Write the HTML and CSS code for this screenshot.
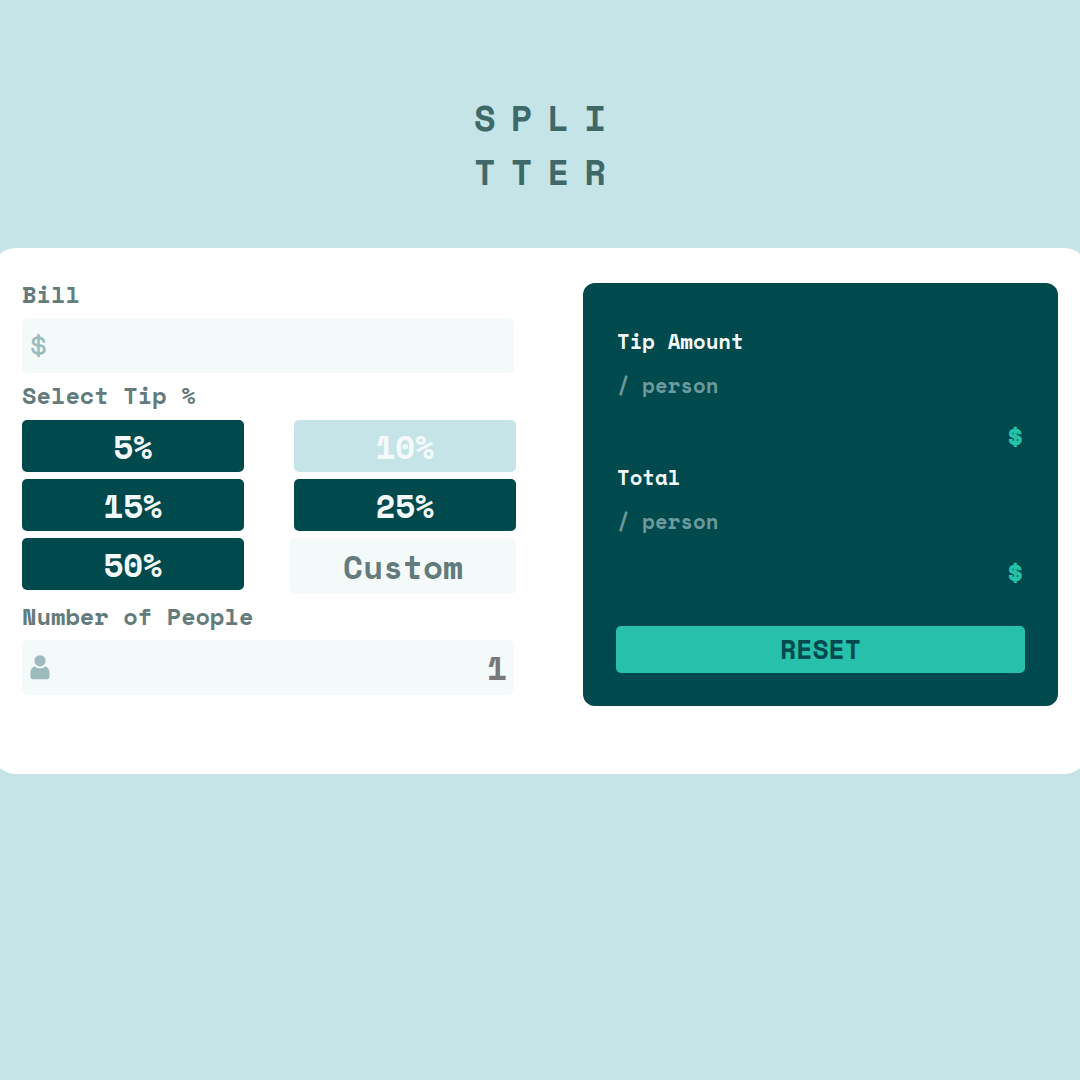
FILE: index.html
```html
<!DOCTYPE html>
<html lang="en">
<head>
<meta charset="utf-8">
<title>Splitter</title>
<link rel="stylesheet" href="styles.css">
</head>
<body>
<h1 class="logo"><span>SPLI</span><span>TTER</span></h1>
<main class="card">
  <section class="form">
    <div class="label">Bill</div>
    <div class="field"><span class="dollar">$</span></div>
    <div class="label label-tip">Select Tip %</div>
    <div class="tips">
      <button class="tip">5%</button>
      <button class="tip active">10%</button>
      <button class="tip">15%</button>
      <button class="tip">25%</button>
      <button class="tip">50%</button>
      <div class="custom">Custom</div>
    </div>
    <div class="label label-people">Number of People</div>
    <div class="field people">
      <svg class="person" viewBox="0 0 20 25"><circle cx="10" cy="5.8" r="5.6"/><path d="M4.6 11.2C6 12.6 7.8 13.3 10 13.3s4-.7 5.4-2.1C18 12 19.6 14.8 19.6 18v3.5c0 1.7-1 2.8-2.7 2.8H3.1C1.4 24.3.4 23.2.4 21.5V18c0-3.2 1.6-6 4.2-6.8z"/></svg>
      <span class="count">1</span>
    </div>
  </section>
  <section class="panel">
    <div class="name">Tip Amount</div>
    <div class="per">/ person</div>
    <div class="amount">$</div>
    <div class="name">Total</div>
    <div class="per">/ person</div>
    <div class="amount">$</div>
    <button class="reset">RESET</button>
  </section>
</main>
</body>
</html>
```
FILE: styles.css
```css
* { box-sizing: border-box; }
body {
  margin: 0;
  height: 1080px;
  overflow: hidden;
  background: #c5e4e7;
  font-family: "Space Mono", "Liberation Mono", monospace;
  font-weight: 700;
}
button { border: 0; padding: 0; font: inherit; }
.logo {
  margin: 0;
  padding: 91px 0 0 474px;
  height: 248px;
  font-size: 35.5px;
  line-height: 54px;
  letter-spacing: 15px;
  color: #3f6868;
}
.logo span { display: block; }
.card {
  display: flex;
  justify-content: space-between;
  align-items: flex-start;
  height: 525.5px;
  margin: 0 -8px;
  padding: 35px 30px 0;
  border-radius: 24px;
  background: #fff;
}
.form { width: 494px; }
.label {
  height: 35px;
  padding-top: 1px;
  font-size: 23.65px;
  line-height: 22px;
  color: #647b7c;
}
.label-tip { height: 46.5px; padding-top: 12px; }
.label-people { height: 46px; padding-top: 12px; }
.field {
  display: flex;
  align-items: center;
  justify-content: space-between;
  width: 492px;
  height: 55px;
  padding: 0 7px 0 8px;
  border-radius: 5px;
  background: #f4fafa;
}
.dollar {
  margin: -1px 0 0 -2px;
  font-size: 35px;
  font-weight: 400;
  line-height: 50px;
  color: #9dbbbd;
}
.person { width: 20px; height: 25px; fill: #9dbbbd; }
.count { font-size: 32.5px; color: #787878; padding-top: 1px; }
.tips {
  display: grid;
  grid-template-columns: 222px 222px;
  grid-template-rows: 52px 52px 56px;
  justify-content: space-between;
  row-gap: 7.3px;
}
.tip {
  height: 52px;
  border-radius: 5px;
  background: #00494d;
  color: #f4fafa;
  font-size: 32.2px;
  line-height: 54px;
}
.tip.active { background: #c5e4e7; }
.custom {
  margin-left: -4px;
  border-radius: 5px;
  background: #f4fafa;
  color: #647b7c;
  font-size: 32.7px;
  line-height: 57px;
  text-align: center;
}
.panel {
  width: 475px;
  height: 423px;
  padding: 42px 33px 0;
  border-radius: 12px;
  background: #00494d;
}
.name { font-size: 20.7px; line-height: 32px; color: #f4fafa; padding-left: 1px; }
.per { margin-top: 12px; font-size: 20.7px; line-height: 32px; color: #6d9a9c; padding-left: 1px; }
.amount {
  height: 60px;
  padding: 16.5px 0 0;
  font-size: 32px;
  line-height: 36px;
  text-align: right;
  color: #26c0ab;
}
.reset {
  display: block;
  width: 409px;
  height: 47px;
  margin-top: 29px;
  border-radius: 5px;
  background: #26c0ab;
  color: #00494d;
  font-size: 26.5px;
  line-height: 47px;
}
```
